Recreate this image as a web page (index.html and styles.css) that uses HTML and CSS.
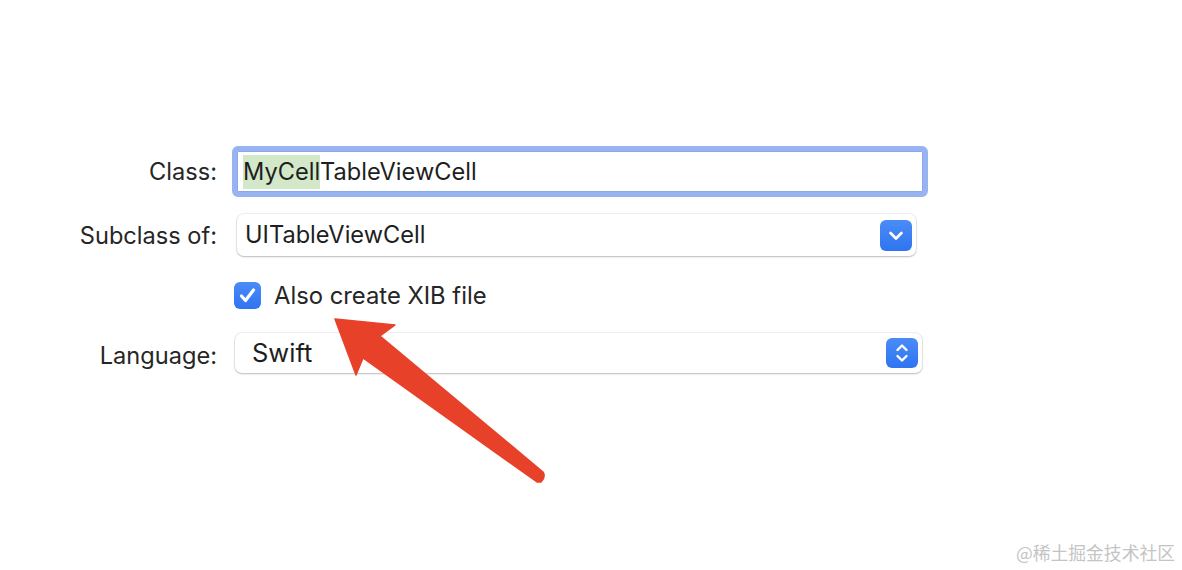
FILE: index.html
```html
<!DOCTYPE html>
<html>
<head>
<meta charset="utf-8">
<link rel="stylesheet" href="styles.css">
</head>
<body>
<div class="page">
  <div class="form">
    <div class="row row-class">
      <label class="label">Class:</label>
      <div class="textfield">
        <span class="text"><span class="hl">MyCell</span>TableViewCell</span>
      </div>
    </div>
    <div class="row row-sub">
      <label class="label">Subclass of:</label>
      <div class="popup popup-sub">
        <span class="text text-sub">UITableViewCell</span>
        <span class="btn btn-sub">
          <svg width="32" height="31" viewBox="0 0 32 31"><path d="M10.5 13 L16 18.5 L21.5 13" fill="none" stroke="#fff" stroke-width="2.6" stroke-linecap="round" stroke-linejoin="round"/></svg>
        </span>
      </div>
    </div>
    <div class="row row-check">
      <span class="checkbox">
        <svg width="27" height="27" viewBox="0 0 27 27"><path d="M7.5 14 L11.5 18.5 L19.5 8" fill="none" stroke="#fff" stroke-width="3.2" stroke-linecap="round" stroke-linejoin="round"/></svg>
      </span>
      <span class="check-text">Also create XIB file</span>
    </div>
    <div class="row row-lang">
      <label class="label label-lang">Language:</label>
      <div class="popup popup-lang">
        <span class="text text-lang">Swift</span>
        <span class="btn btn-lang">
          <svg width="32" height="30" viewBox="0 0 32 30"><path d="M11.5 12 L16 7.5 L20.5 12 M11.5 18 L16 22.5 L20.5 18" fill="none" stroke="#fff" stroke-width="2.4" stroke-linecap="round" stroke-linejoin="round"/></svg>
        </span>
      </div>
    </div>
  </div>
  <svg class="arrow" width="1182" height="570" viewBox="0 0 1182 570">
    <path d="M335 319 L395 325 L380 336 L543 472 Q546 477 541 482 L537 482 L363 358 L356 375 Z" fill="#e8412a" stroke="#e8412a" stroke-width="1.5" stroke-linejoin="round"/>
  </svg>
  <div class="watermark">@稀土掘金技术社区</div>
</div>
</body>
</html>
```
FILE: styles.css
```css
html, body {
  margin: 0;
  padding: 0;
  background: #ffffff;
}
.page {
  position: relative;
  width: 1182px;
  height: 570px;
  overflow: hidden;
  font-family: Inter, "Liberation Sans", sans-serif;
  color: #262626;
}
.form {
  display: flex;
  flex-direction: column;
  padding-top: 146px;
}
.row {
  display: flex;
  align-items: center;
}
.label {
  width: 217px;
  text-align: right;
  font-size: 23.6px;
  flex: none;
}
.row-class { height: 51px; }
.row-sub { height: 42px; margin-top: 17px; }
.row-check { height: 27px; margin-top: 26px; padding-left: 234px; }
.row-lang { height: 40px; margin-top: 24px; }
.textfield {
  margin-left: 15px;
  width: 696px;
  height: 51px;
  box-sizing: border-box;
  border: 5px solid #97b3f1;
  border-radius: 6px;
  box-shadow: inset 0 0 0 1px #8aa8ea;
  background: #fff;
  display: flex;
  align-items: center;
  padding-left: 6px;
}
.text {
  font-size: 23.6px;
  color: #1e1e1e;
}
.text-sub { margin-top: -2px; }
.hl {
  background: #d3e8c9;
  padding: 2px 0 3px;
}
.popup {
  box-sizing: border-box;
  height: 42px;
  background: #fff;
  border-radius: 7px;
  box-shadow: 0 0 0 1px rgba(0,0,0,0.06), 0 1px 2px rgba(0,0,0,0.22);
  display: flex;
  align-items: center;
  justify-content: space-between;
  padding: 0 4px 0 8px;
}
.popup-sub {
  margin-left: 20px;
  width: 679px;
}
.popup-lang {
  margin-left: 18px;
  width: 687px;
  height: 40px;
  padding-left: 17px;
}
.text-lang {
  font-size: 25.5px;
  color: #1e1e1e;
  margin-top: -2px;
}
.label-lang { padding-top: 4px; }
.btn {
  display: block;
  width: 32px;
  height: 31px;
  border-radius: 6px;
  background: linear-gradient(#4a8cf7, #2f74f1);
}
.btn svg { display: block; }
.btn-lang { height: 30px; }
.checkbox {
  width: 27px;
  height: 27px;
  border-radius: 6px;
  background: linear-gradient(#4a8cf7, #2f74f1);
  flex: none;
}
.checkbox svg { display: block; }
.check-text {
  margin-left: 13px;
  font-size: 23.8px;
  color: #262626;
}
.arrow {
  position: absolute;
  left: 0;
  top: 0;
}
.watermark {
  position: absolute;
  right: 7px;
  bottom: 5px;
  font-family: "Noto Sans CJK SC", sans-serif;
  font-size: 17.8px;
  color: #c4c4c4;
}
```
